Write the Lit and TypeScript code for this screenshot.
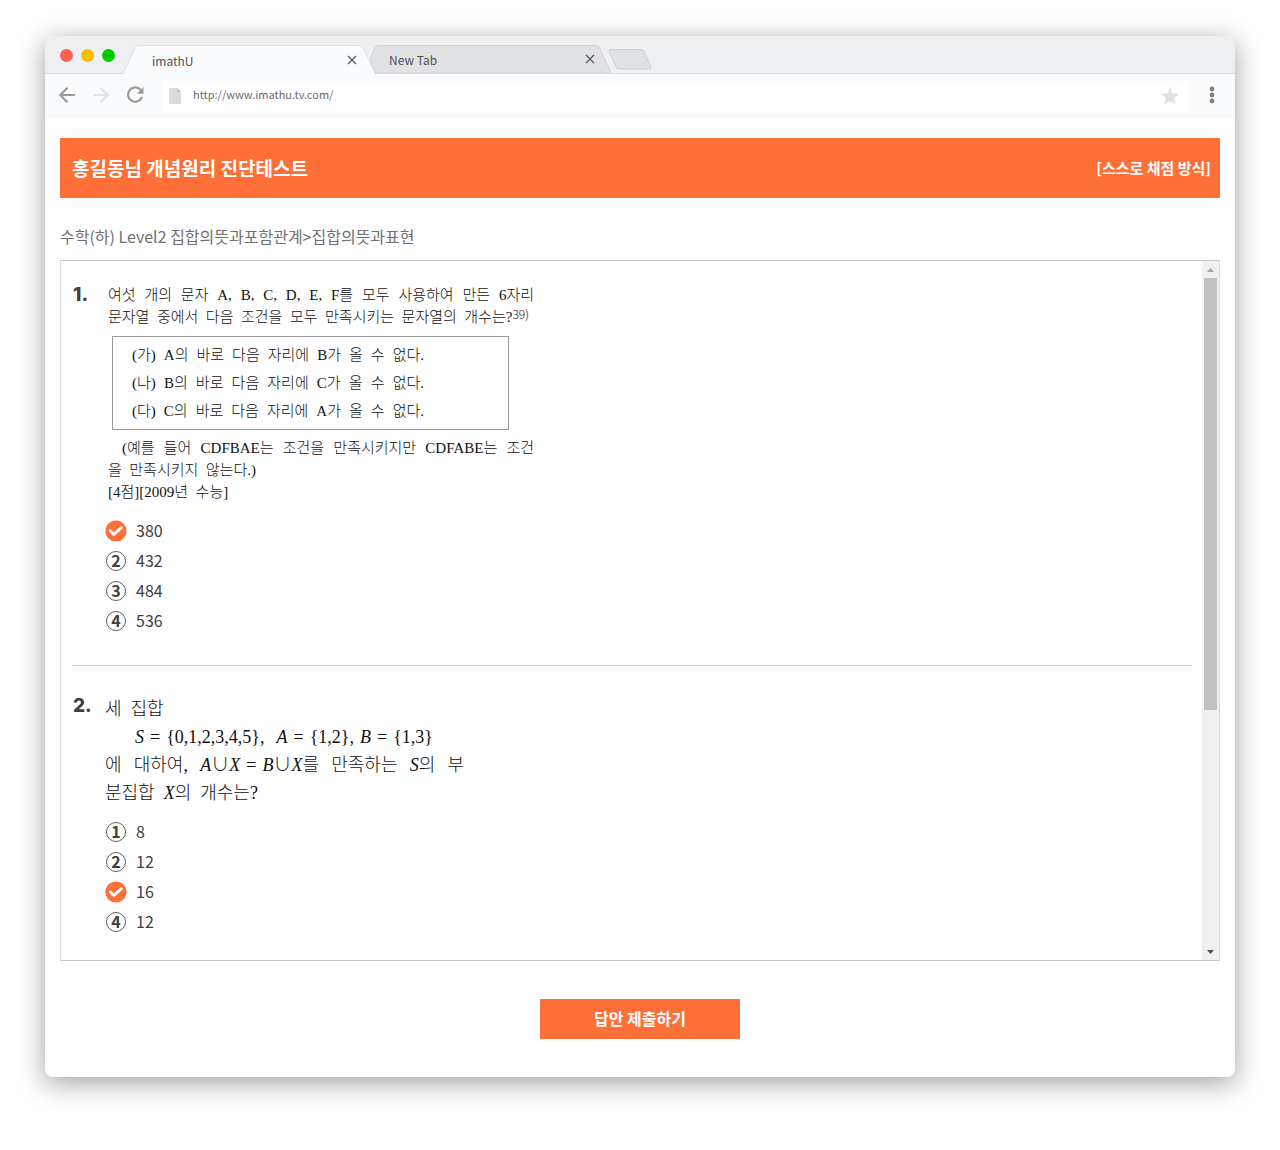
import { LitElement, html, css } from "lit";
import { customElement, property } from "lit/decorators.js";

const closeIcon = html`<svg width="10" height="10" viewBox="0 0 10 10" aria-hidden="true">
  <path d="M1 1 9 9M9 1 1 9" stroke="#5c5c5c" stroke-width="1.3" fill="none" />
</svg>`;

const checkIcon = html`<svg width="22" height="22" viewBox="0 0 22 22" aria-hidden="true">
  <circle cx="11" cy="11" r="10.6" fill="#ff6f38" />
  <path d="M5 10.800 8.900 14.400 16.400 7.600" fill="none" stroke="#fff" stroke-width="2.8" stroke-linecap="round" stroke-linejoin="round" />
</svg>`;

@customElement("browser-frame")
export class BrowserFrame extends LitElement {
  @property() address = "";

  static styles = css`
    :host {
      display: block;
      border-radius: 8px;
      background: #fff;
      box-shadow: 0 6px 28px rgba(0, 0, 0, 0.38);
      font-family: "Noto Sans CJK KR", sans-serif;
      font-size: 12px;
      color: #505050;
    }
    button {
      display: flex;
      align-items: center;
      justify-content: center;
      padding: 0;
      border: 0;
      background: none;
      cursor: pointer;
    }
    .tabs {
      display: flex;
      align-items: flex-end;
      height: 37px;
      padding-left: 15px;
      border-bottom: 1px solid #d9dadb;
      border-radius: 8px 8px 0 0;
      background: #eeeff1;
    }
    .lights {
      display: flex;
      gap: 8px;
      width: 63px;
      align-self: center;
      padding-top: 2px;
    }
    .light {
      width: 13px;
      height: 13px;
      border-radius: 50%;
      background: #ff5f52;
    }
    .light.amber {
      background: #ffbd00;
    }
    .light.green {
      background: #00ca00;
    }
    .tab {
      position: relative;
      display: flex;
      align-items: center;
      justify-content: space-between;
      box-sizing: border-box;
      width: 252px;
      height: 29px;
      padding: 0 18px 0 29px;
    }
    .tab.active {
      z-index: 1;
      margin-bottom: -1px;
    }
    .tab.idle {
      width: 242px;
      height: 28px;
      margin-left: -5px;
      padding: 0 17px 0 19px;
    }
    .shape {
      position: absolute;
      inset: 0;
      z-index: -1;
    }
    .tab.idle .shape {
      z-index: 0;
    }
    .name {
      position: relative;
      line-height: 20px;
      padding-top: 2px;
    }
    .tab button {
      position: relative;
      width: 10px;
      height: 10px;
    }
    .new-tab {
      align-self: center;
      margin: 9px 0 0 -4px;
    }
    .toolbar {
      display: flex;
      align-items: center;
      height: 42px;
      padding: 0 19px 2px 13px;
      background: #fafbfd;
    }
    .nav {
      display: flex;
      gap: 16px;
      width: 104px;
    }
    .address {
      flex: 1;
      display: flex;
      align-items: center;
      gap: 12px;
      height: 31px;
      margin-top: 2px;
      padding: 0 9px 0 7px;
      background: #fff;
    }
    input {
      flex: 1;
      min-width: 0;
      padding: 0 0 4px;
      border: 0;
      outline: 0;
      background: none;
      color: #6c6c6c;
      font: inherit;
      font-size: 11px;
    }
    .more {
      width: 8px;
      margin-left: 20px;
    }
  `;

  render() {
    return html`
      <div class="tabs">
        <div class="lights">
          <span class="light"></span><span class="light amber"></span><span class="light green"></span>
        </div>
        <div class="tab active">
          <svg class="shape" width="252" height="30" viewBox="0 0 252 30" aria-hidden="true">
            <path d="M0 30 12 3Q13.300 .5 16 .5H236Q239 .5 240.200 3L252 30Z" fill="#fafbfd" />
            <path d="M.5 28.500 12 3Q13.300 .5 16 .5H236Q239 .5 240.200 3L252 28.500" fill="none" stroke="#dfe0e1" />
          </svg>
          <span class="name">imathU</span>
          <button aria-label="Close imathU">${closeIcon}</button>
        </div>
        <div class="tab idle">
          <svg class="shape" width="242" height="28" viewBox="0 0 242 28" aria-hidden="true">
            <path d="M0 14 5 2.500Q6 .5 8 .5H226Q228.500 .5 229.500 2.500L241 28H6Z" fill="#e1e2e4" stroke="#d3d4d5" />
          </svg>
          <span class="name">New Tab</span>
          <button aria-label="Close New Tab">${closeIcon}</button>
        </div>
        <button class="new-tab" aria-label="Open a tab">
          <svg width="44" height="21" viewBox="0 0 44 21" aria-hidden="true">
            <path d="M3 .5H33Q35 .5 36 2.500L42.800 18Q43.500 20 41.500 20H11Q9 20 8 18L1 3Q.3 .5 3 .5Z" fill="#e0e1e3" stroke="#d0d1d3" />
          </svg>
        </button>
      </div>
      <div class="toolbar">
        <div class="nav">
          <button aria-label="Back">
            <svg width="18" height="18" viewBox="0 0 18 18" aria-hidden="true">
              <path d="M17 9H2.500M9.500 1.700 2.200 9 9.500 16.300" fill="none" stroke="#9b9b9b" stroke-width="2.200" />
            </svg>
          </button>
          <button aria-label="Forward">
            <svg width="18" height="18" viewBox="0 0 18 18" aria-hidden="true">
              <path d="M1 9H15.500M8.500 1.700 15.800 9 8.500 16.300" fill="none" stroke="#e2e3e4" stroke-width="2.200" />
            </svg>
          </button>
          <button aria-label="Reload">
            <svg width="18" height="18" viewBox="0 0 18 18" aria-hidden="true">
              <path d="M15 4.200A7.200 7.200 0 1 0 16 11" fill="none" stroke="#9b9b9b" stroke-width="2.200" />
              <path d="M17.500 1V7.700H10.800Z" fill="#9b9b9b" />
            </svg>
          </button>
        </div>
        <div class="address">
          <svg width="12" height="16" viewBox="0 0 12 16" aria-hidden="true">
            <path d="M0 0H8L12 4V16H0Z" fill="#dadada" />
            <path d="M8 0 12 4H8Z" fill="#bdbdbd" />
          </svg>
          <input aria-label="Address" .value=${this.address} />
          <button aria-label="Bookmark this page">
            <svg width="18" height="18" viewBox="0 0 18 18" aria-hidden="true">
              <path d="M9 .5 11.500 6.300 17.800 6.900 13 11.100 14.500 17.300 9 14 3.500 17.300 5 11.100 .2 6.900 6.500 6.300Z" fill="#dedfe0" />
            </svg>
          </button>
        </div>
        <button class="more" aria-label="Menu">
          <svg width="6" height="18" viewBox="0 0 6 18" aria-hidden="true">
            <g fill="#808080"><circle cx="3" cy="3" r="2.400" /><circle cx="3" cy="9" r="2.400" /><circle cx="3" cy="15" r="2.400" /></g>
          </svg>
        </button>
      </div>
      <slot></slot>
    `;
  }
}

@customElement("answer-options")
export class AnswerOptions extends LitElement {
  @property({ type: Array }) options: string[] = [];
  @property({ type: Number }) selected = 0;
  @property() label = "";

  static styles = css`
    :host {
      display: block;
    }
    fieldset {
      margin: 0;
      padding: 0;
      border: 0;
    }
    .option {
      display: flex;
      align-items: center;
      gap: 9px;
      width: max-content;
      height: 30px;
      font-size: 16px;
      color: #404040;
      cursor: pointer;
    }
    .value {
      padding-bottom: 2px;
    }
    .mark {
      display: grid;
      place-items: center;
      width: 22px;
      height: 22px;
    }
    .mark > * {
      grid-area: 1 / 1;
    }
    input {
      margin: 0;
      width: 22px;
      height: 22px;
      opacity: 0;
      cursor: pointer;
    }
    .digit {
      box-sizing: border-box;
      width: 20px;
      height: 20px;
      border: 1px solid #606060;
      border-radius: 50%;
      font-size: 16px;
      font-weight: 700;
      line-height: 16px;
      text-align: center;
    }
  `;

  render() {
    return html`<fieldset aria-label=${this.label}>
      ${this.options.map(
        (text, i) => html`<label class="option">
          <span class="mark">
            ${i === this.selected ? checkIcon : html`<span class="digit">${i + 1}</span>`}
            <input type="radio" name="answer" .checked=${i === this.selected} @change=${() => (this.selected = i)} />
          </span>
          <span class="value">${text}</span>
        </label>`,
      )}
    </fieldset>`;
  }
}

@customElement("app-root")
export class AppRoot extends LitElement {
  static styles = css`
    :host {
      display: block;
      padding: 36px 45px 73px;
      font-family: "Noto Sans CJK KR", sans-serif;
    }
    .page {
      padding: 20px 15px 38px;
    }
    .banner {
      display: flex;
      align-items: center;
      justify-content: space-between;
      box-sizing: border-box;
      height: 60px;
      padding: 0 9px 2px 12px;
      background: #ff6f38;
      color: #fff;
    }
    h1 {
      margin: 0;
      font-size: 19px;
      font-weight: 700;
    }
    .mode {
      font-size: 15px;
      font-weight: 700;
    }
    .path {
      margin: 26px 0 12px;
      font-size: 16px;
      line-height: 24px;
      color: #707070;
    }
    .sheet {
      display: flex;
      border: 1px solid #c8c8c8;
      border-left-color: #dcdcdc;
      border-right-color: #dcdcdc;
    }
    .questions {
      flex: 1;
      padding: 0 10px 0 11px;
    }
    .question {
      display: grid;
      grid-template-columns: 33px 1fr;
      padding: 23px 0;
    }
    .question + .question {
      padding-top: 29px;
      border-top: 1px solid #d2d2d2;
    }
    .question:first-child {
      padding-bottom: 29px;
    }
    .number {
      padding-left: 1px;
      font-family: Inter, sans-serif;
      font-size: 19px;
      font-weight: 800;
      line-height: 22px;
      color: #404040;
    }
    .text {
      font-family: "Liberation Serif", "Noto Sans CJK KR", serif;
      font-weight: 300;
      font-size: 15px;
      line-height: 22px;
      color: #101010;
      max-width: 426px;
      padding-left: 3px;
    }
    .text.large {
      font-size: 18px;
      line-height: 28px;
      max-width: 359px;
      padding-left: 0;
    }
    .line {
      display: block;
      white-space: pre-wrap;
    }
    .full {
      text-align: justify;
      text-align-last: justify;
    }
    .short {
      padding-right: 5px;
    }
    .indent {
      padding-left: 14px;
    }
    .formula {
      padding: 0 31px 0 30px;
    }
    sup {
      font-family: "Noto Sans CJK KR", sans-serif;
      font-size: 12px;
      line-height: 1;
      vertical-align: 3px;
    }
    .conditions {
      margin: 8px 25px 7px 4px;
      padding: 4px 84px 4px 19px;
      border: 1px solid #999;
      line-height: 28px;
    }
    .answers {
      grid-column: 2;
      margin-top: 13px;
    }
    .large + .answers {
      margin-top: 10px;
    }
    .scrollbar {
      display: flex;
      flex-direction: column;
      width: 17px;
      background: #f0f0f0;
    }
    .arrow {
      display: grid;
      place-items: center;
      height: 17px;
    }
    .track {
      flex: 1;
      padding: 0 2px;
    }
    .thumb {
      height: 65%;
      background: #c1c1c1;
    }
    .submit {
      display: block;
      width: 200px;
      height: 40px;
      margin: 38px auto 0;
      padding: 0 0 2px;
      border: 0;
      background: #ff6f38;
      color: #fff;
      font: 700 16px "Noto Sans CJK KR", sans-serif;
      cursor: pointer;
    }
  `;

  render() {
    return html`
      <browser-frame address="http://www.imathu.tv.com/">
        <main class="page">
          <header class="banner">
            <h1>홍길동님 개념원리 진단테스트</h1>
            <span class="mode">[스스로 채점 방식]</span>
          </header>
          <p class="path">수학(하) Level2 집합의뜻과포함관계&gt;집합의뜻과표현</p>
          <div class="sheet">
            <div class="questions">
              <section class="question">
                <span class="number">1.</span>
                <div class="text">
                  <span class="line full">여섯  개의  문자  A,  B,  C,  D,  E,  F를  모두  사용하여  만든  6자리</span>
                  <span class="line full short">문자열  중에서  다음  조건을  모두  만족시키는  문자열의  개수는?<sup>39)</sup></span>
                  <div class="conditions">
                    <span class="line full">(가)  A의  바로  다음  자리에  B가  올  수  없다.</span>
                    <span class="line full">(나)  B의  바로  다음  자리에  C가  올  수  없다.</span>
                    <span class="line full">(다)  C의  바로  다음  자리에  A가  올  수  없다.</span>
                  </div>
                  <span class="line full indent">(예를  들어  CDFBAE는  조건을  만족시키지만  CDFABE는  조건</span>
                  <span class="line">을  만족시키지  않는다.)</span>
                  <span class="line">[4점][2009년  수능]</span>
                </div>
                <answer-options class="answers" label="1." .options=${["380", "432", "484", "536"]} .selected=${0}></answer-options>
              </section>
              <section class="question">
                <span class="number">2.</span>
                <div class="text large">
                  <span class="line">세  집합</span>
                  <span class="line full formula"><i>S</i> = {0,1,2,3,4,5},  <i>A</i> = {1,2}, <i>B</i> = {1,3}</span>
                  <span class="line full">에  대하여,  <i>A</i>∪<i>X</i> = <i>B</i>∪<i>X</i>를  만족하는  <i>S</i>의  부</span>
                  <span class="line">분집합  <i>X</i>의  개수는?</span>
                </div>
                <answer-options class="answers" label="2." .options=${["8", "12", "16", "12"]} .selected=${2}></answer-options>
              </section>
            </div>
            <div class="scrollbar" aria-hidden="true">
              <span class="arrow"><svg width="7" height="4" viewBox="0 0 7 4"><path d="M0 4 3.500 0 7 4Z" fill="#a3a3a3" /></svg></span>
              <div class="track"><div class="thumb"></div></div>
              <span class="arrow"><svg width="7" height="4" viewBox="0 0 7 4"><path d="M0 0 3.500 4 7 0Z" fill="#505050" /></svg></span>
            </div>
          </div>
          <button class="submit">답안 제출하기</button>
        </main>
      </browser-frame>
    `;
  }
}
